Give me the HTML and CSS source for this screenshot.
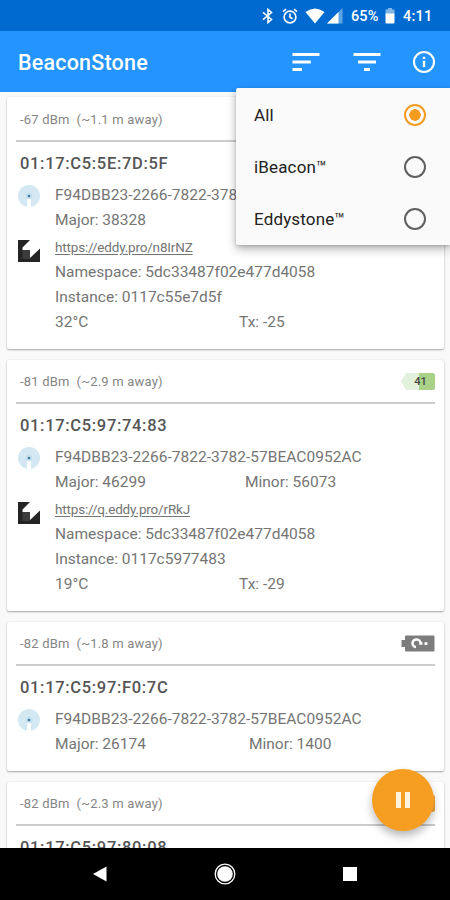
FILE: index.html
```
<!DOCTYPE html>
<html lang="en">
<head>
<meta charset="utf-8">
<title>BeaconStone</title>
<link rel="stylesheet" href="styles.css">
</head>
<body>
<svg width="0" height="0" class="defs">
  <defs>
    <symbol id="ibeacon" viewBox="0 0 22 22">
      <circle cx="11" cy="11" r="11" fill="#d3e8f2"/>
      <path d="M9 22V14.500a2 2 0 0 1 4 0V22z" fill="#fff"/>
      <circle cx="11" cy="11" r="3" fill="#bfdeed"/>
      <circle cx="11" cy="11" r="1.300" fill="#457c9e"/>
    </symbol>
    <symbol id="eddystone" viewBox="0 0 22 22">
      <path d="M0 0H12L4.500 7.500V10H12V18L22 8.500V22H0z" fill="#242424"/>
      <path d="M4.500 10H12V19H4.500z" fill="#3c3c3c"/>
    </symbol>
  </defs>
</svg>
<div class="phone">
  <header class="status">
    <svg class="bt" width="12" height="16" viewBox="0 0 12 16" fill="none" stroke="#fff" stroke-width="1.600"><path d="M1 4.300L9.500 11.500L6 14.500V1.500L9.500 4.500L1 11.700"/></svg>
    <svg class="alarm" width="16" height="16" viewBox="0 0 16 16" fill="none" stroke="#fff" stroke-width="1.600"><circle cx="8" cy="9" r="5.900"/><path d="M8 5.500V9.200L10.500 10.700M1 3.700L4 1.200M15 3.700L12 1.200"/></svg>
    <svg class="wifi" width="20" height="16" viewBox="0 0 20 16"><path d="M.5 4Q10-3 19.500 4L10 15.500z" fill="#fff"/></svg>
    <svg class="cell" width="16" height="16" viewBox="0 0 16 16"><path d="M15.500 0V15.500H0z" fill="#5ba5e5"/><path d="M11.500 4V15.500H0z" fill="#fff"/></svg>
    <span class="pct">65%</span>
    <svg class="batt" width="10" height="16" viewBox="0 0 10 16"><path d="M3 0H7V1.500H9.500V6H.5V1.500H3z" fill="#80b7e8"/><path d="M.5 5.500H9.500V14.500a1 1 0 0 1-1 1H1.500a1 1 0 0 1-1-1z" fill="#fff"/></svg>
    <span class="clock">4:11</span>
  </header>
  <nav class="appbar">
    <h1>BeaconStone</h1>
    <svg class="sort" width="28" height="20" viewBox="0 0 28 20" fill="#fff"><path d="M.5 1H27.500V4H.5zM.5 8.500H18.800V11.500H.5zM.5 16H10V19H.5z"/></svg>
    <svg class="filter" width="28" height="20" viewBox="0 0 28 20" fill="#fff"><path d="M.5 1H27.500V4H.5zM5 8.500H23V11.500H5zM11 16H17V19H11z"/></svg>
    <svg class="info" width="24" height="24" viewBox="0 0 24 24" fill="none" stroke="#fff" stroke-width="2.100"><circle cx="12" cy="12" r="10"/><path d="M12 10.800V17M12 6.800V9" stroke-width="2.400"/></svg>
  </nav>
  <main class="list">
    <article class="card tall">
      <div class="head"><span>-67 dBm&nbsp; (~1.1 m away)</span></div>
      <h2>01:17:C5:5E:7D:5F</h2>
      <section class="beacon"><svg class="icon"><use href="#ibeacon"/></svg>
        <div><p class="uuid">F94DBB23-2266-7822-3782-57BEAC0952AC</p><p class="pair"><span>Major: 38328</span></p></div></section>
      <section class="beacon eddy"><svg class="icon"><use href="#eddystone"/></svg>
        <div><p class="url"><a>https://eddy.pro/n8IrNZ</a></p><p>Namespace: 5dc33487f02e477d4058</p><p>Instance: 0117c55e7d5f</p><p class="pair temp"><span>32°C</span><span>Tx: -25</span></p></div></section>
    </article>
    <article class="card tall">
      <div class="head"><span>-81 dBm&nbsp; (~2.9 m away)</span>
        <span class="level"><b>41</b></span></div>
      <h2>01:17:C5:97:74:83</h2>
      <section class="beacon"><svg class="icon"><use href="#ibeacon"/></svg>
        <div><p class="uuid">F94DBB23-2266-7822-3782-57BEAC0952AC</p><p class="pair"><span>Major: 46299</span><span>Minor: 56073</span></p></div></section>
      <section class="beacon eddy"><svg class="icon"><use href="#eddystone"/></svg>
        <div><p class="url"><a>https://q.eddy.pro/rRkJ</a></p><p>Namespace: 5dc33487f02e477d4058</p><p>Instance: 0117c5977483</p><p class="pair temp"><span>19°C</span><span>Tx: -29</span></p></div></section>
    </article>
    <article class="card short">
      <div class="head"><span>-82 dBm&nbsp; (~1.8 m away)</span>
        <svg width="34" height="17" viewBox="0 0 34 17"><path d="M5 .5H32.500a1 1 0 0 1 1 1V15.500a1 1 0 0 1-1 1H5a1 1 0 0 1-1-1V12H.5V5H4V1.500a1 1 0 0 1 1-1z" fill="#7d7d7d"/><path d="M15 12A4 3.800 0 1 1 19.500 8.500H21.500" fill="none" stroke="#fff" stroke-width="2.500"/><path d="M23.500 7.200H26.400V10H23.500z" fill="#fff"/></svg></div>
      <h2>01:17:C5:97:F0:7C</h2>
      <section class="beacon"><svg class="icon"><use href="#ibeacon"/></svg>
        <div><p class="uuid">F94DBB23-2266-7822-3782-57BEAC0952AC</p><p class="pair minor4"><span>Major: 26174</span><span>Minor: 1400</span></p></div></section>
    </article>
    <article class="card short">
      <div class="head"><span>-82 dBm&nbsp; (~2.3 m away)</span><span class="level low"></span></div>
      <h2>01:17:C5:97:80:08</h2>
    </article>
  </main>
  <footer class="navbar">
    <svg width="14" height="16" viewBox="0 0 14 16"><path d="M0 8L13.500 .5V15.500z" fill="#fff"/></svg>
    <svg width="22" height="22" viewBox="0 0 22 22"><circle cx="11" cy="11" r="9.800" fill="none" stroke="#fff" stroke-width="1.300"/><circle cx="11" cy="11" r="7.800" fill="#fff"/></svg>
    <svg width="14" height="14" viewBox="0 0 14 14"><path d="M0 0H14V14H0z" fill="#fff"/></svg>
  </footer>
  <div class="menu">
    <div class="option"><span>All</span><i class="radio on"></i></div>
    <div class="option"><span>iBeacon™</span><i class="radio"></i></div>
    <div class="option"><span>Eddystone™</span><i class="radio"></i></div>
  </div>
  <div class="fab"><i></i><i></i></div>
</div>
</body>
</html>
```
FILE: styles.css
```
* { box-sizing: border-box; }
body, h1, h2, p { margin: 0; }
body { font-family: Roboto, sans-serif; color: #757575; }
svg { display: block; flex: none; }
.defs { position: absolute; }
.phone { position: relative; width: 450px; height: 900px; overflow: hidden; display: flex; flex-direction: column; background: #f9f9f9; }

.status { height: 31px; flex: none; background: #006ad0; color: #fff; display: flex; align-items: center; padding: 1px 0 0 262px; font-size: 14.5px; font-weight: 500; }
.alarm { margin-left: 8px; }
.wifi { margin-left: 7px; }
.cell { margin-left: 2px; }
.pct { margin-left: 8px; width: 30px; letter-spacing: 0.1px; }
.batt { margin-left: 4px; }
.clock { margin-left: 8px; letter-spacing: 0.2px; }

.appbar { height: 61px; flex: none; background: #2494ff; color: #fff; display: flex; align-items: center; padding: 1px 14px 0 18px; }
h1 { font-size: 21.5px; font-weight: 500; width: 274px; letter-spacing: 0.2px; padding-top: 1px; }
.filter { margin-left: 33px; }
.info { margin-left: 31px; width: 24px; }

.list { flex: 1; min-height: 0; overflow: hidden; padding: 5px 6px 0 7px; display: flex; flex-direction: column; gap: 11px; }
.card { flex: none; background: #fff; border-radius: 2px; box-shadow: 0 1px 2px rgba(0,0,0,.32), 0 0 1px rgba(0,0,0,.12); padding: 0 9px; }
.tall { height: 251px; }
.short { height: 149px; }
.card:first-child { padding-top: 1px; }
.card:first-child { height: 252px; }
.head { height: 44px; border-bottom: 2px solid #ccc; display: flex; align-items: center; justify-content: space-between; padding: 1px 0 0 4px; font-size: 13px; letter-spacing: 0.2px; color: #858585; }
h2 { font-size: 16.500px; line-height: 24px; margin: 10px 0 0 4px; font-weight: 500; color: #555; letter-spacing: 0.68px; }
.beacon { display: flex; gap: 15px; padding: 7px 0 0 2px; }
.icon { width: 22px; height: 22px; margin-top: 2px; }
.eddy { padding-top: 3px; }
.eddy .icon { margin-top: 4px; }
p { font-size: 15.500px; line-height: 25px; white-space: nowrap; }
.uuid { letter-spacing: 0.03px; }
.pair { display: flex; }
.pair span:first-child { width: 190px; }
.pair.temp span:first-child { width: 184px; }
.pair.minor4 span:first-child { width: 194px; }
.url { font-size: 13.500px; line-height: 23px; letter-spacing: -0.18px; height: 24px; }
.url a { text-decoration: underline; text-underline-offset: 2px; }
.level { width: 34px; height: 17px; background: linear-gradient(90deg, #e3f0dc 54%, #a9d288 54%); clip-path: polygon(0 50%, 5px 0, 100% 0, 100% 100%, 5px 100%); border-radius: 2px; color: #444; font-size: 11px; line-height: 17px; text-align: center; padding-left: 5px; letter-spacing: 0; }
.level.low { background: #f5a936; }
.level b { font-weight: 500; }

.navbar { height: 52px; flex: none; background: #000; display: flex; align-items: center; justify-content: space-between; padding: 0 93px 0 93px; }

.menu { position: absolute; left: 236px; top: 88px; width: 214px; height: 157px; background: #fafafa; border-radius: 2px 0 0 2px; box-shadow: 0 4px 10px rgba(0,0,0,.3), 0 1px 3px rgba(0,0,0,.15); display: flex; flex-direction: column; }
.option { flex: 1; display: flex; align-items: center; justify-content: space-between; padding: 1px 24px 0 18px; font-size: 17px; letter-spacing: 0.15px; color: #222; }
.radio { width: 22px; height: 22px; border-radius: 50%; border: 2px solid #606060; display: block; }
.radio.on { border-color: #f59b20; background: radial-gradient(circle, #f59b20 5.500px, transparent 6px); }

.fab { position: absolute; left: 372px; top: 769px; width: 62px; height: 62px; border-radius: 50%; background: #f59e22; box-shadow: 0 5px 8px rgba(0,0,0,.28); display: flex; align-items: center; justify-content: center; gap: 4px; }
.fab i { width: 5px; height: 16px; background: #fff3df; }
```
